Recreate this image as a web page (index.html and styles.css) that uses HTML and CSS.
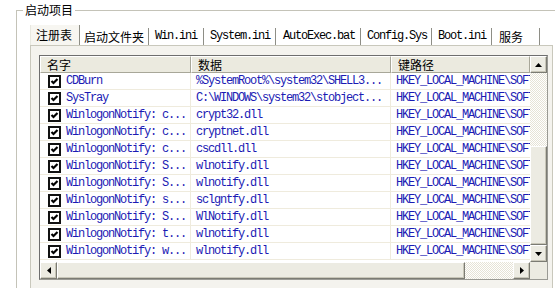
FILE: index.html
```html
<!DOCTYPE html>
<html lang="zh-CN">
<head>
<meta charset="utf-8">
<title>启动项目</title>
<link rel="stylesheet" href="styles.css">
</head>
<body>
<div class="group">
  <div class="group-title zh">启动项目</div>
  <div class="group-body">
    <div class="tabs">
      <div class="tab tab-active zh">注册表</div>
      <div class="tab zh">启动文件夹</div>
      <div class="tab">Win.ini</div>
      <div class="tab">System.ini</div>
      <div class="tab">AutoExec.bat</div>
      <div class="tab">Config.Sys</div>
      <div class="tab">Boot.ini</div>
      <div class="tab zh">服务</div>
    </div>
    <div class="panel">
      <div class="list">
        <div class="view">
          <div class="head">
            <div class="hcell zh">名字</div>
            <div class="hcell zh">数据</div>
            <div class="hcell zh">键路径</div>
          </div>
          <div class="row"><div class="cell name"><span class="check"><svg viewBox="0 0 9 9"><path d="M1.5 4 L3.5 6 L7.5 2"/></svg></span>CDBurn</div><div class="cell">%SystemRoot%\system32\SHELL3...</div><div class="cell">HKEY_LOCAL_MACHINE\SOFTWARE</div></div>
          <div class="row"><div class="cell name"><span class="check"><svg viewBox="0 0 9 9"><path d="M1.5 4 L3.5 6 L7.5 2"/></svg></span>SysTray</div><div class="cell">C:\WINDOWS\system32\stobject...</div><div class="cell">HKEY_LOCAL_MACHINE\SOFTWARE</div></div>
          <div class="row"><div class="cell name"><span class="check"><svg viewBox="0 0 9 9"><path d="M1.5 4 L3.5 6 L7.5 2"/></svg></span>WinlogonNotify: c...</div><div class="cell">crypt32.dll</div><div class="cell">HKEY_LOCAL_MACHINE\SOFTWARE</div></div>
          <div class="row"><div class="cell name"><span class="check"><svg viewBox="0 0 9 9"><path d="M1.5 4 L3.5 6 L7.5 2"/></svg></span>WinlogonNotify: c...</div><div class="cell">cryptnet.dll</div><div class="cell">HKEY_LOCAL_MACHINE\SOFTWARE</div></div>
          <div class="row"><div class="cell name"><span class="check"><svg viewBox="0 0 9 9"><path d="M1.5 4 L3.5 6 L7.5 2"/></svg></span>WinlogonNotify: c...</div><div class="cell">cscdll.dll</div><div class="cell">HKEY_LOCAL_MACHINE\SOFTWARE</div></div>
          <div class="row"><div class="cell name"><span class="check"><svg viewBox="0 0 9 9"><path d="M1.5 4 L3.5 6 L7.5 2"/></svg></span>WinlogonNotify: S...</div><div class="cell">wlnotify.dll</div><div class="cell">HKEY_LOCAL_MACHINE\SOFTWARE</div></div>
          <div class="row"><div class="cell name"><span class="check"><svg viewBox="0 0 9 9"><path d="M1.5 4 L3.5 6 L7.5 2"/></svg></span>WinlogonNotify: S...</div><div class="cell">wlnotify.dll</div><div class="cell">HKEY_LOCAL_MACHINE\SOFTWARE</div></div>
          <div class="row"><div class="cell name"><span class="check"><svg viewBox="0 0 9 9"><path d="M1.5 4 L3.5 6 L7.5 2"/></svg></span>WinlogonNotify: s...</div><div class="cell">sclgntfy.dll</div><div class="cell">HKEY_LOCAL_MACHINE\SOFTWARE</div></div>
          <div class="row"><div class="cell name"><span class="check"><svg viewBox="0 0 9 9"><path d="M1.5 4 L3.5 6 L7.5 2"/></svg></span>WinlogonNotify: S...</div><div class="cell">WlNotify.dll</div><div class="cell">HKEY_LOCAL_MACHINE\SOFTWARE</div></div>
          <div class="row"><div class="cell name"><span class="check"><svg viewBox="0 0 9 9"><path d="M1.5 4 L3.5 6 L7.5 2"/></svg></span>WinlogonNotify: t...</div><div class="cell">wlnotify.dll</div><div class="cell">HKEY_LOCAL_MACHINE\SOFTWARE</div></div>
          <div class="row"><div class="cell name"><span class="check"><svg viewBox="0 0 9 9"><path d="M1.5 4 L3.5 6 L7.5 2"/></svg></span>WinlogonNotify: w...</div><div class="cell">wlnotify.dll</div><div class="cell">HKEY_LOCAL_MACHINE\SOFTWARE</div></div>
        </div>
        <div class="vscroll">
          <div class="sbtn"><svg viewBox="0 0 7 4"><path d="M3.5 0 L7 4 L0 4Z"/></svg></div>
          <div class="track vtrack-top"></div>
          <div class="thumb vthumb"></div>
          <div class="sbtn"><svg viewBox="0 0 7 4"><path d="M0 0 L7 0 L3.5 4Z"/></svg></div>
        </div>
        <div class="hscroll">
          <div class="sbtn"><svg class="hz" viewBox="0 0 4 7"><path d="M4 0 L4 7 L0 3.5Z"/></svg></div>
          <div class="thumb hthumb"></div>
          <div class="track htrack"></div>
          <div class="sbtn"><svg class="hz" viewBox="0 0 4 7"><path d="M0 0 L4 3.5 L0 7Z"/></svg></div>
        </div>
        <div class="corner"></div>
      </div>
    </div>
  </div>
</div>
</body>
</html>
```
FILE: styles.css
```css
html, body {
  margin: 0;
  height: 288px;
  overflow: hidden;
  background: #ffffff;
}
body {
  font-family: "Liberation Mono", "Noto Sans CJK SC", monospace;
  font-size: 12px;
  letter-spacing: -1.2px;
  color: #000;
}
.zh {
  font-family: "Noto Sans CJK SC", sans-serif;
  letter-spacing: 0;
}
.group {
  margin: 10px 0 0 16px;
  border-top: 1px solid #c4c3b8;
  border-left: 1px solid #c4c3b8;
  height: 400px;
}
.group-title {
  width: max-content;
  margin: -9px 0 0 6px;
  padding: 0 2px;
  background: #fff;
  line-height: 16px;
  height: 16px;
}
.group-body {
  padding-left: 13px;
}
.tabs {
  display: flex;
  align-items: flex-end;
  height: 20px;
  margin-top: 7px;
}
.tab {
  flex: none;
  box-sizing: border-box;
  height: 17px;
  line-height: 17px;
  padding-left: 6px;
  border-right: 1px solid #8e8e86;
  white-space: nowrap;
  overflow: hidden;
}
.tab:nth-child(1) { width: 50px; }
.tab:nth-child(2) { width: 69px; padding-left: 4px; }
.tab:nth-child(3) { width: 55px; }
.tab:nth-child(4) { width: 72px; }
.tab:nth-child(5) { width: 85px; padding-left: 7px; }
.tab:nth-child(6) { width: 71px; }
.tab:nth-child(7) { width: 60px; }
.tab:nth-child(8) { width: 48px; padding-left: 7px; }
.tab-active {
  height: 20px;
  line-height: 20px;
  padding-left: 5px;
  border-left: 1px solid #e8e8e0;
  background: #f7f6f1;
}
.panel {
  width: 513px;
  height: 300px;
  border-top: 1px solid #c9c8bc;
  border-left: 1px solid #c9c8bc;
  border-right: 1px solid #c9c8bc;
  background: #f4f3ee;
  padding: 9px 0 0 8px;
}
.list {
  width: 509px;
  height: 225px;
  box-sizing: border-box;
  border: 1px solid #6e6e6e;
  border-right-color: #9a9a94;
  border-bottom-color: #9a9a94;
  display: grid;
  grid-template-columns: 490px 17px;
  grid-template-rows: 206px 17px;
  background: #fff;
}
.view {
  overflow: hidden;
  background: #fff;
}
.head {
  display: grid;
  grid-template-columns: 151px 200px 139px;
  height: 17px;
}
.hcell {
  box-sizing: border-box;
  height: 17px;
  line-height: 16px;
  padding-left: 6px;
  background: #ebeadf;
  border-top: 1px solid #fff;
  border-left: 1px solid #fff;
  border-right: 1px solid #a8a799;
  border-bottom: 1px solid #a8a799;
  white-space: nowrap;
  overflow: hidden;
}
.row {
  display: grid;
  grid-template-columns: 151px 200px 139px;
  height: 17px;
  box-sizing: border-box;
  border-bottom: 1px solid #efebdd;
  color: #1b1bb4;
}
.cell {
  line-height: 16px;
  white-space: nowrap;
  overflow: hidden;
  padding-left: 5px;
  border-right: 1px solid #efebdd;
}
.cell:last-child {
  border-right: 0;
}
.name {
  display: flex;
  align-items: center;
  padding-left: 8px;
}
.check {
  flex: none;
  width: 13px;
  height: 13px;
  box-sizing: border-box;
  border: 2px solid #111;
  background: #fff;
  margin-right: 5px;
  display: flex;
}
.check svg {
  width: 9px;
  height: 9px;
  fill: none;
  stroke: #000;
  stroke-width: 2.2;
}
.vscroll {
  display: flex;
  flex-direction: column;
}
.hscroll {
  display: flex;
}
.sbtn {
  flex: none;
  width: 17px;
  height: 17px;
  box-sizing: border-box;
  background: #ecebe2;
  border-top: 1px solid #fff;
  border-left: 1px solid #fff;
  border-right: 1px solid #7b7b73;
  border-bottom: 1px solid #7b7b73;
  box-shadow: inset -1px -1px #c8c6b8;
  display: flex;
  align-items: center;
  justify-content: center;
}
.sbtn svg {
  width: 7px;
  height: 4px;
  fill: #000;
}
.sbtn svg.hz {
  width: 4px;
  height: 7px;
}
.track {
  background: repeating-conic-gradient(#e6e3d6 0 25%, #ffffff 0 50%) 0 0 / 2px 2px;
}
.vtrack-top {
  height: 73px;
}
.thumb {
  box-sizing: border-box;
  background: #ecebe2;
  border-top: 1px solid #fff;
  border-left: 1px solid #fff;
  border-right: 1px solid #7b7b73;
  border-bottom: 1px solid #7b7b73;
  box-shadow: inset -1px -1px #c8c6b8;
}
.vthumb {
  height: 99px;
}
.hthumb {
  width: 408px;
}
.htrack {
  width: 48px;
}
.corner {
  background: #ecebe2;
}
```
